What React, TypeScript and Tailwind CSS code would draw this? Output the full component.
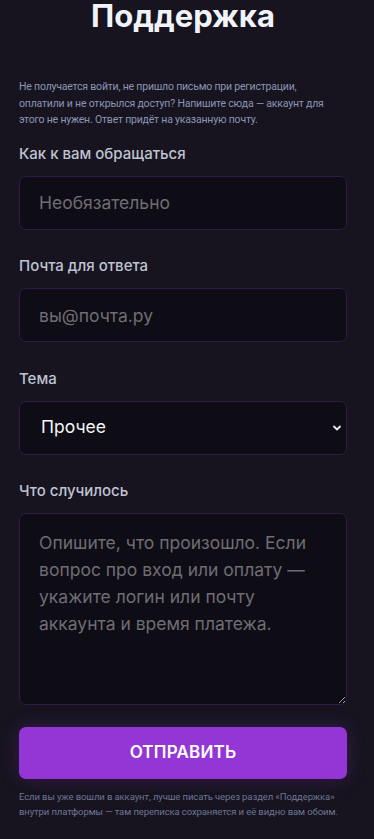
import { useState } from "react";

function Label({ children, htmlFor }: { children: React.ReactNode; htmlFor: string }) {
  return (
    <label htmlFor={htmlFor} className="block text-[15px] leading-[22px] font-medium text-[#bfc3d3]">
      {children}
    </label>
  );
}

const fieldCls =
  "w-full rounded-[7px] border border-[#2f1a4a] bg-[#0e0c14] px-[19px] text-[17.5px] text-[#e8e8ee] placeholder-[#6f6d74] outline-none [color-scheme:dark]";

export default function App() {
  const [name, setName] = useState("");
  const [email, setEmail] = useState("");
  const [topic, setTopic] = useState("other");
  const [message, setMessage] = useState("");

  return (
    <div
      className="min-h-[839px] bg-[#17141f] pl-[19px] pr-[27px] pb-6"
      style={{ fontFamily: "Inter, 'Noto Sans', sans-serif" }}
    >
      <h1 className="-mt-[3px] text-center text-[31px] leading-[38px] font-bold text-[#f1f3fa]">Поддержка</h1>

      <p className="mt-[44px] w-[320px] font-['Roboto',sans-serif] text-[10.5px] leading-[16.5px] tracking-[-0.2px] text-[#8c94b6]">
        Не получается войти, не пришло письмо при регистрации, оплатили и не открылся доступ? Напишите сюда — аккаунт
        для этого не нужен. Ответ придёт на указанную почту.
      </p>

      <form className="mt-[14px] flex flex-col gap-[25.5px]" onSubmit={(e) => e.preventDefault()}>
        <div className="flex flex-col gap-[11px]">
          <Label htmlFor="name">Как к вам обращаться</Label>
          <input
            id="name"
            value={name}
            onChange={(e) => setName(e.target.value)}
            placeholder="Необязательно"
            className={`${fieldCls} h-[54px]`}
          />
        </div>

        <div className="flex flex-col gap-[11px]">
          <Label htmlFor="email">Почта для ответа</Label>
          <input
            id="email"
            type="email"
            value={email}
            onChange={(e) => setEmail(e.target.value)}
            placeholder="вы@почта.ру"
            className={`${fieldCls} h-[54px]`}
          />
        </div>

        <div className="flex flex-col gap-[11px]">
          <Label htmlFor="topic">Тема</Label>
          <div className="relative">
            <select
              id="topic"
              value={topic}
              onChange={(e) => setTopic(e.target.value)}
              className={`${fieldCls} h-[54px] appearance-none pl-[21px] text-[#f4f4f8]`}
            >
              <option value="login">Вход</option>
              <option value="payment">Оплата</option>
              <option value="other">Прочее</option>
            </select>
            <svg
              className="pointer-events-none absolute right-[5px] top-1/2 -translate-y-1/2"
              width="10"
              height="10"
              viewBox="0 0 10 10"
              fill="none"
            >
              <path d="M2 3.5 5 6.5 8 3.5" stroke="#e8e8f0" strokeWidth="1.8" strokeLinecap="round" strokeLinejoin="round" />
            </svg>
          </div>
        </div>

        <div className="flex flex-col gap-[11px]">
          <Label htmlFor="msg">Что случилось</Label>
          <textarea
            id="msg"
            value={message}
            onChange={(e) => setMessage(e.target.value)}
            placeholder="Опишите, что произошло. Если вопрос про вход или оплату — укажите логин или почту аккаунта и время платежа."
            className={`${fieldCls} h-[192px] pt-[15px] leading-[27px]`}
          />
        </div>

        <div className="-mt-[4px] flex flex-col gap-[10px]">
          <button
            type="submit"
            className="h-[52px] w-full rounded-[7px] bg-[#9435d6] text-[17px] font-semibold tracking-[0.2px] text-white shadow-[0_0_18px_rgba(148,53,214,0.25)]"
          >
            ОТПРАВИТЬ
          </button>
          <p className="w-[322px] font-['Roboto',sans-serif] text-[9.5px] leading-[15px] tracking-[-0.1px] text-[#6d7594]">
            Если вы уже вошли в аккаунт, лучше писать через раздел «Поддержка» внутри платформы — там переписка
            сохраняется и её видно вам обоим.
          </p>
        </div>
      </form>
    </div>
  );
}
